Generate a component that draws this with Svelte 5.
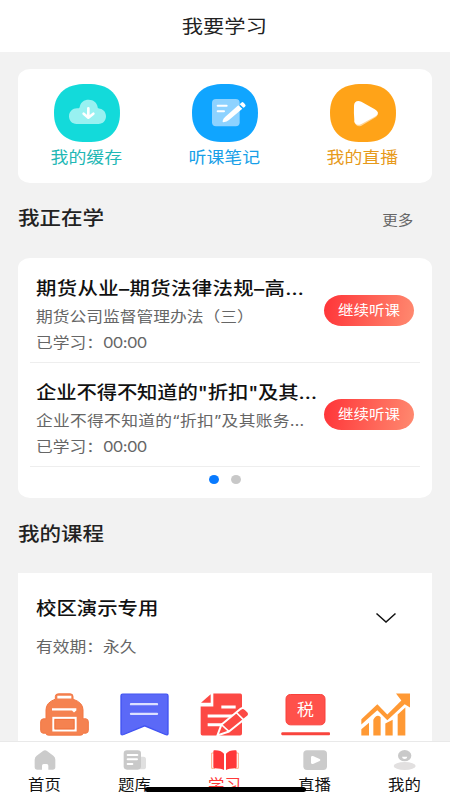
<script lang="ts">
  interface Lesson {
    title: string
    chapter: string
    learned: string
  }

  const shortcuts = [
    { id: 'cache', label: '我的缓存' },
    { id: 'notes', label: '听课笔记' },
    { id: 'live', label: '我的直播' }
  ]

  const lessons: Lesson[] = [
    { title: '期货从业–期货法律法规–高…', chapter: '期货公司监督管理办法（三）', learned: '00:00' },
    { title: '企业不得不知道的"折扣"及其…', chapter: '企业不得不知道的“折扣”及其账务…', learned: '00:00' }
  ]

  const courses = ['bag', 'bookmark', 'exercise', 'tax', 'growth']

  const tabs = [
    { id: 'home', label: '首页' },
    { id: 'bank', label: '题库' },
    { id: 'study', label: '学习' },
    { id: 'stream', label: '直播' },
    { id: 'mine', label: '我的' }
  ]

  let activeTab = $state('study')
  let activePage = $state(0)
</script>

<div class="app">
  <header><h1 class="wide">我要学习</h1></header>

  <main>
    <section class="card shortcuts">
      {#each shortcuts as item (item.id)}
        <div class="shortcut {item.id}">
          <svg class="tile" viewBox="0 0 198 174">
            <path
              class="tile-bg"
              d="M99 0C132 0 157 5 176 25C192 42 198 62 198 87C198 112 192 132 176 149C157 169 132 174 99 174C66 174 41 169 22 149C6 132 0 112 0 87C0 62 6 42 22 25C41 5 66 0 99 0Z"
            />
            {#if item.id === 'cache'}
              <path
                fill="#98f1f1"
                d="M68 120C54 120 45 110 45 97C45 83 56 73 69 73C74 73 76 73 77 70C79 55 90 47 104 47C119 47 130 57 131 70C131 73 134 74 138 74C149 76 156 85 156 97C156 110 147 120 133 120Z"
              />
              <path class="line" stroke-width="8" d="M103 73V98M89 89L103 101L118 89" />
            {:else if item.id === 'notes'}
              <rect x="60" y="45" width="83" height="82" rx="12" fill="#8dd2ff" />
              <path class="line" stroke-width="6" d="M77 65H104M77 82H96" />
              <path
                fill="#fff"
                d="M147 57L151 54Q154 54 161 64Q160 68 157 70L154 71L143 61ZM139 64L151 74L111 108Q105 113 94 115Q91 115 92 110Q94 103 100 98Z"
              />
            {:else}
              <path
                fill="#ffd596"
                d="M72 110Q76 129 93 126L138 99Q145 93 143 84Z"
              />
              <path
                fill="#fff"
                d="M72 65C72 53 82 48 94 53L133 75C147 83 147 92 133 99L94 120C82 126 73 121 73 109Q71 87 72 65Z"
              />
            {/if}
          </svg>
          <span class="wide">{item.label}</span>
        </div>
      {/each}
    </section>

    <div class="heading">
      <h2 class="wide left">我正在学</h2>
      <span class="more wide right">更多</span>
    </div>

    <section class="card lessons">
      {#each lessons as lesson}
        <article>
          <div class="info">
            <h3 class="wide left">{lesson.title}</h3>
            <p class="chapter wide left">{lesson.chapter}</p>
            <p class="wide left">已学习：<span class="time">{lesson.learned}</span></p>
          </div>
          <button type="button" class="continue"><span class="wide">继续听课</span></button>
        </article>
      {/each}
      <div class="dots">
        {#each [0, 1] as page}
          <button
            type="button"
            class:active={activePage === page}
            aria-label={`${page + 1}`}
            onclick={() => (activePage = page)}
          ></button>
        {/each}
      </div>
    </section>

    <div class="heading second">
      <h2 class="wide left">我的课程</h2>
    </div>

    <section class="course">
      <div class="course-head">
        <div>
          <h3 class="wide left">校区演示专用</h3>
          <p class="wide left">有效期：永久</p>
        </div>
        <svg class="chevron" viewBox="0 0 22 12">
          <path d="M1.5 1.5L11 10L20.5 1.5" fill="none" stroke="#111" stroke-width="1.5" />
        </svg>
      </div>
      <div class="course-icons">
        {#each courses as course}
          <svg viewBox="0 0 147 128">
            {#if course === 'bag'}
              <path
                fill="#f58250"
                stroke="#f27743"
                stroke-width="3"
                d="M18 77V50Q18 28 46 18V10Q46 2 55 2H91Q99 2 99 10V18Q129 28 129 50V77H138Q145 78 145 86V112Q145 119 138 120H129Q129 126 122 126H25Q18 126 18 120H9Q2 119 2 112V86Q2 78 10 77Z"
              />
              <path fill="#fff" d="M52 8H94V16H52ZM36 45H109V52L102 58L96 52H36Z" />
              <rect x="40" y="74" width="67" height="38" fill="none" stroke="#fff" stroke-width="6" />
              <path fill="none" stroke="#f06c35" stroke-width="2" d="M45 79H102V107H45Z" />
            {:else if course === 'bookmark'}
              <path
                fill="#5b69f7"
                stroke="#4052f2"
                stroke-width="4"
                d="M8 3H139Q144 3 144 8V122Q143 127 136 124L74 98L11 124Q3 127 3 121V8Q3 3 8 3Z"
              />
              <path stroke="#dce0ff" stroke-width="7" stroke-linecap="round" d="M33 33H111M33 62H111" />
            {:else if course === 'exercise'}
              <path fill="#fc4944" d="M40 1H121Q126 1 126 7V121Q126 127 120 127H7Q2 127 2 121V40H40Z" />
              <path fill="#fc4944" d="M3 29L32 3V29Z" />
              <path fill="#fff" d="M64 37H107V46H64ZM23 64H107V73H23ZM23 90H76V99H23Z" />
              <path
                fill="#fc4944"
                stroke="#fff"
                stroke-width="6"
                stroke-linejoin="round"
                d="M52 127L64 95L122 47Q129 42 136 48L145 57Q150 64 143 70L87 115Z"
              />
              <path fill="none" stroke="#fff" stroke-width="5" d="M64 94L88 116M109 58L131 80" />
            {:else if course === 'tax'}
              <rect x="15" y="4" width="117" height="91" rx="13" fill="#ff514b" stroke="#f9413b" stroke-width="3" />
              <text x="0" y="0" transform="translate(73.5 66) scale(1.08 1)">税</text>
              <rect x="1" y="117" width="146" height="9" rx="3" fill="#f9443d" />
            {:else}
              <g fill="#ff9934">
                <path d="M1 108L24 89V127H1ZM37 80Q47 61 59 72V127H37ZM73 91L95 80V127H73ZM110 64L133 43V127H110Z" />
                <path d="M1 78L49 33L79 64L121 22L105 1H147V43L131 33L79 81L49 51L1 94Z" />
              </g>
            {/if}
          </svg>
        {/each}
      </div>
    </section>
  </main>

  <nav>
    {#each tabs as tab (tab.id)}
      <button
        type="button"
        class="tab"
        class:active={activeTab === tab.id}
        onclick={() => (activeTab = tab.id)}
      >
        <svg viewBox="0 0 84 60">
          {#if tab.id === 'home'}
            <path
              fill="#cbcbcb"
              d="M36 3Q42 -1 48 3L67 17Q73 22 73 29V51Q73 59 65 59H52V47Q52 42 47 42H38Q33 42 33 47V59H19Q11 59 11 51V29Q11 22 17 17Z"
            />
          {:else if tab.id === 'bank'}
            <path fill="#e0e0e0" d="M56 20H68Q75 20 75 28V51Q75 58 67 58H50Z" />
            <rect x="8" y="1" width="52" height="58" rx="10" fill="#c9c9c9" />
            <path stroke="#fff" stroke-width="6" stroke-linecap="round" d="M20 15H49M20 28H48M20 42H34" />
          {:else if tab.id === 'study'}
            <path fill="none" stroke="#ffae85" stroke-width="3" d="M9 9H2V55H12M75 9H82V55H72" />
            <path
              fill="#ff3838"
              d="M39 11Q29 0 10 1Q7 1 7 5V51Q7 55 12 55Q30 55 39 60ZM45 11Q55 0 74 1Q77 1 77 5V51Q77 55 72 55Q54 55 45 60Z"
            />
          {:else if tab.id === 'stream'}
            <rect x="7" y="1" width="71" height="59" rx="11" fill="#cbcbcb" />
            <path fill="#fff" d="M30 22Q30 17 36 18L56 27Q60 30 56 33L36 42Q30 43 30 38Z" />
          {:else}
            <ellipse cx="41" cy="48" rx="33" ry="12" fill="#e2e0e0" />
            <ellipse cx="41" cy="17" rx="20" ry="17" fill="#c9c9c9" />
            <path fill="#fff" d="M33 20H49Q48 27 41 27Q34 27 33 20Z" />
          {/if}
        </svg>
        <span class="wide">{tab.label}</span>
      </button>
    {/each}
    <div class="home-indicator"></div>
  </nav>
</div>

<style>
  :global(body) {
    margin: 0;
  }

  .app {
    display: flex;
    flex-direction: column;
    width: 450px;
    height: 800px;
    overflow: hidden;
    background: #f2f2f2;
    color: #222;
    font-family: Inter, 'Noto Sans CJK SC', sans-serif;
  }

  h1,
  h2,
  h3,
  p {
    margin: 0;
    font-weight: 400;
    white-space: nowrap;
  }

  button {
    padding: 0;
    border: 0;
    background: none;
    font: inherit;
    cursor: pointer;
  }

  /* glyphs are wider than they are tall */
  .wide {
    display: block;
    white-space: nowrap;
    transform: scaleX(1.14);
  }

  .left {
    transform-origin: left;
  }

  .right {
    transform-origin: right;
  }

  header {
    display: flex;
    align-items: center;
    justify-content: center;
    flex: none;
    box-sizing: border-box;
    height: 52px;
    padding: 2px 1px 0 0;
    background: #fff;
  }

  h1 {
    font-size: 18.7px;
    line-height: 28px;
  }

  main {
    flex: 1;
    min-height: 0;
    overflow: hidden;
    padding: 17px 18px 0;
  }

  .card {
    border-radius: 12px / 10px;
    background: #fff;
  }

  .shortcuts {
    display: grid;
    grid-template-columns: repeat(3, 1fr);
    height: 114px;
  }

  .shortcut {
    display: flex;
    flex-direction: column;
    align-items: center;
    padding-top: 15px;
    font-size: 15.7px;
    line-height: 24px;
  }

  .shortcut .wide {
    margin-right: 1px;
  }

  .tile {
    width: 66px;
    height: 58px;
    margin-bottom: 4px;
  }

  .line {
    fill: none;
    stroke: #fff;
    stroke-linecap: round;
    stroke-linejoin: round;
  }

  .cache {
    color: #1fb8b5;
  }

  .cache .tile-bg {
    fill: #13dada;
  }

  .notes {
    color: #189fe8;
  }

  .notes .tile-bg {
    fill: #10a5ff;
  }

  .live {
    color: #e79a1b;
  }

  .live .tile-bg {
    fill: #ffa318;
  }

  .heading {
    display: flex;
    align-items: center;
    justify-content: space-between;
    height: 72px;
    padding-right: 19px;
    margin-bottom: 3px;
  }

  .heading.second {
    height: 73px;
    margin-bottom: 2px;
  }

  h2 {
    font-size: 18.9px;
    font-weight: 500;
    line-height: 28px;
  }

  .more {
    margin-top: -1px;
    color: #666;
    font-size: 13.6px;
  }

  .lessons {
    box-sizing: border-box;
    height: 240px;
    padding-top: 1px;
  }

  article {
    display: flex;
    justify-content: space-between;
    box-sizing: border-box;
    height: 104px;
    margin: 0 12px;
    padding: 15px 6px 0;
    border-bottom: 1px solid #eee;
  }

  .info {
    width: 280px;
  }

  h3 {
    padding-bottom: 1px;
    color: #111;
    font-size: 17.9px;
    font-weight: 500;
    line-height: 29px;
  }

  article:first-child h3 {
    letter-spacing: 0.3px;
  }

  article:nth-child(2) h3 {
    letter-spacing: -0.15px;
  }

  article:nth-child(2) .chapter {
    letter-spacing: 0.25px;
  }

  p {
    color: #666;
    font-size: 14.7px;
    line-height: 26px;
  }

  .time {
    letter-spacing: -0.6px;
  }

  .continue {
    width: 90px;
    height: 31px;
    margin-top: 21px;
    border-radius: 18px / 16px;
    background: linear-gradient(100deg, #ff3438, #ff8a70);
    color: #fff;
    font-size: 13.6px;
    line-height: 29px;
  }

  .dots {
    display: flex;
    justify-content: center;
    gap: 12px;
    padding-top: 8px;
  }

  .dots button {
    width: 10px;
    height: 9px;
    border-radius: 50%;
    background: #c8c8c8;
  }

  .dots .active {
    background: #087aff;
  }

  .course {
    height: 200px;
    background: #fff;
  }

  .course-head {
    display: flex;
    justify-content: space-between;
    height: 120px;
    padding: 0 35px 0 18px;
  }

  .course-head h3 {
    padding-top: 21px;
  }

  .course-head p {
    padding-top: 10px;
  }

  .chevron {
    width: 22px;
    height: 12px;
    margin-top: 39px;
  }

  .course-icons {
    display: grid;
    grid-template-columns: repeat(5, 1fr);
    justify-items: center;
    padding: 0 6px;
  }

  .course-icons svg {
    width: 49px;
    height: 43px;
  }

  .course-icons text {
    fill: #fff;
    font-size: 47px;
    text-anchor: middle;
  }

  nav {
    position: relative;
    display: grid;
    grid-template-columns: repeat(5, 1fr);
    flex: none;
    box-sizing: border-box;
    height: 59px;
    border-top: 1px solid #e9e9e9;
    background: #fff;
  }

  .tab {
    display: flex;
    flex-direction: column;
    align-items: center;
    padding-top: 8px;
    color: #111;
    font-size: 14.4px;
    line-height: 24px;
  }

  .tab svg {
    width: 28px;
    height: 20px;
    margin-bottom: 3px;
  }

  .tab .wide {
    margin-right: 1px;
  }

  .tab.active {
    color: #ff3838;
  }

  .home-indicator {
    position: absolute;
    top: 45px;
    left: 145px;
    width: 161px;
    height: 5px;
    border-radius: 3px;
    background: #000;
  }
</style>
